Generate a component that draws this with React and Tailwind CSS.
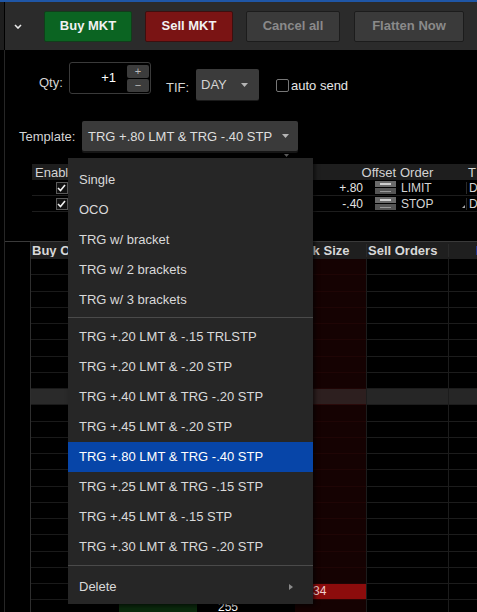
import React from "react";

const templates = [
  ["Single", "OCO", "TRG w/ bracket", "TRG w/ 2 brackets", "TRG w/ 3 brackets"],
  [
    "TRG +.20 LMT & -.15 TRLSTP",
    "TRG +.20 LMT & -.20 STP",
    "TRG +.40 LMT & TRG -.20 STP",
    "TRG +.45 LMT & -.20 STP",
    "TRG +.80 LMT & TRG -.40 STP",
    "TRG +.25 LMT & TRG -.15 STP",
    "TRG +.45 LMT & -.15 STP",
    "TRG +.30 LMT & TRG -.20 STP",
  ],
];
const current = "TRG +.80 LMT & TRG -.40 STP";

const orders = [
  { offset: "+.80", type: "LIMIT", tif: "D" },
  { offset: "-.40", type: "STOP", tif: "D", grip: true },
];

const ladderRows = Array.from({ length: 22 }, (_, i) => ({
  id: i,
  mid: i === 8,
  ask: i === 20 ? "34" : "",
  bid: i === 21,
  price: i === 21 ? "255" : "",
}));

function Caret({ className = "" }) {
  return (
    <svg width="7" height="4" viewBox="0 0 7 4" className={className}>
      <polygon points="0,0 7,0 3.5,4" fill="#b5b5b5" />
    </svg>
  );
}

function Check() {
  return (
    <span className="flex h-[12px] w-[12px] items-center justify-center border border-[#5a5a5a] bg-[#111]">
      <svg width="9" height="8" viewBox="0 0 9 8">
        <polyline points="1,4 3.5,6.5 8,1" fill="none" stroke="#f2f2f2" strokeWidth="1.6" />
      </svg>
    </span>
  );
}

function OrderSpin() {
  return (
    <div className="flex w-[21px] flex-col gap-px">
      <div className="flex h-[6px] items-center justify-center bg-[#6a6a6a]">
        <div className="h-[2px] w-[11px] bg-[#cfcfcf]" />
      </div>
      <div className="flex h-[6px] items-center justify-center bg-[#555]">
        <div className="h-px w-[11px] bg-[#9a9a9a]" />
      </div>
    </div>
  );
}

function TemplateMenu() {
  return (
    <div className="absolute left-[68px] top-[158px] w-[245px] bg-[#262626] pb-[2px] pt-[7px] text-[13px] text-[#dadada] shadow-[2px_2px_4px_rgba(0,0,0,0.6)]">
      {templates[0].map((t) => (
        <div key={t} className="flex h-[30px] items-center pl-[11px]">
          {t}
        </div>
      ))}
      <div className="mb-[4px] mt-[2px] h-px bg-[#4a4a4a]" />
      {templates[1].map((t) => (
        <div
          key={t}
          className={`flex h-[30px] items-center pl-[11px] ${
            t === current ? "bg-[#0745a8] text-white" : ""
          }`}
        >
          {t}
        </div>
      ))}
      <div className="mb-[6px] mt-[3px] h-px bg-[#4a4a4a]" />
      <div className="flex h-[30px] items-center justify-between pl-[11px] pr-[20px]">
        <span>Delete</span>
        <svg width="4" height="6" viewBox="0 0 4 6">
          <polygon points="0,0 4,3 0,6" fill="#8a8a8a" />
        </svg>
      </div>
    </div>
  );
}

export default function App() {
  return (
    <div className="relative h-[612px] w-[477px] overflow-hidden bg-black font-['Liberation_Sans',Arial,sans-serif] text-[13px] text-[#d4d4d4]">
      <div className="h-[2px] bg-[#1f56a6]" />
      <div className="flex h-[610px]">
        {/* left rail */}
        <div className="flex w-[5px] shrink-0 flex-col">
          <div className="h-[48px] border-r border-black bg-[#1e1e1e]" />
          <div className="flex-1 border-r border-[#262626]" />
        </div>

        <div className="flex min-w-0 flex-1 flex-col">
          {/* toolbar */}
          <div className="flex h-[48px] shrink-0 items-center bg-[#2b2b2b] pl-[9px]">
            <svg width="8" height="5" viewBox="0 0 8 5" className="mt-px shrink-0">
              <polyline points="1,1 4,4 7,1" fill="none" stroke="#e8e8e8" strokeWidth="1.6" />
            </svg>
            <button className="ml-[22px] h-[31px] w-[88px] shrink-0 rounded-[2px] border border-[#123d1b] bg-[#0b6422] text-[13px] font-bold text-[#f2f2f2]">
              Buy MKT
            </button>
            <button className="ml-[13px] h-[31px] w-[88px] shrink-0 rounded-[2px] border border-[#3d0f0f] bg-[#7a1414] text-[13px] font-bold text-[#f2f2f2]">
              Sell MKT
            </button>
            <button className="ml-[13px] h-[31px] w-[94px] shrink-0 rounded-[2px] border border-[#1c1c1c] bg-[#3a3a3a] text-[13px] font-bold text-[#8a8a8a]">
              Cancel all
            </button>
            <button className="ml-[14px] h-[31px] w-[110px] shrink-0 rounded-[2px] border border-[#1c1c1c] bg-[#3a3a3a] text-[13px] font-bold text-[#8a8a8a]">
              Flatten Now
            </button>
          </div>

          {/* qty / tif / auto send */}
          <div className="flex shrink-0 items-start pl-[34px] pt-[12px]">
            <span className="mt-[13px] w-[30px] leading-[15px]">Qty:</span>
            <div className="flex h-[32px] w-[82px] items-center rounded-[3px] border border-[#3a3a3a] bg-black pr-[1px]">
              <span className="flex-1 pr-[11px] text-right text-white">+1</span>
              <div className="flex flex-col gap-px">
                <span className="flex h-[13px] w-[22px] items-center justify-center rounded-[2px] bg-[#3c3c3c] text-[11px] leading-none text-[#bbb]">
                  +
                </span>
                <span className="flex h-[13px] w-[22px] items-center justify-center rounded-[2px] bg-[#3c3c3c] text-[11px] leading-none text-[#bbb]">
                  −
                </span>
              </div>
            </div>
            <span className="ml-[15px] mt-[18px] w-[30px] leading-[15px]">TIF:</span>
            <div className="mt-[7px] flex h-[31px] w-[63px] items-center justify-between rounded-[2px] bg-[#3b3b3b] pl-[5px] pr-[11px] shadow-[0_1px_0_#1a1a1a]">
              <span>DAY</span>
              <Caret />
            </div>
            <span className="ml-[17px] mt-[17px] h-[13px] w-[13px] rounded-[2px] border border-[#777] bg-black" />
            <span className="ml-[2px] mt-[16px] leading-[15px] text-[#e6e6e6]">auto send</span>
          </div>

          {/* template */}
          <div className="mt-[21px] flex shrink-0 items-center pl-[14px]">
            <span className="w-[63px] pt-[2px]">Template:</span>
            <div className="flex h-[30px] w-[216px] items-center justify-between rounded-[2px] bg-[#3a3a3a] pl-[6px] pr-[9px] text-[#dedede] shadow-[0_2px_0_#151515]">
              <span className="pt-px">{current}</span>
              <Caret />
            </div>
          </div>

          {/* order table */}
          <div className="ml-[27px] mt-[13px] flex shrink-0 flex-col">
            <div className="flex h-[16px] items-center bg-[#1e1e1e] leading-none">
              <span className="w-[59px] shrink-0 pl-[3px]">Enable</span>
              <span className="min-w-0 flex-1" />
              <span className="w-[84px] shrink-0 pr-[1px] text-right">Offset</span>
              <span className="w-[69px] shrink-0 pl-[3px]">Order</span>
              <span className="w-[11px] shrink-0 overflow-hidden pl-[2px]">T</span>
            </div>
            {orders.map((o) => (
              <div key={o.type} className="flex h-[16px] items-center border-b border-[#1d1d1d] text-[12px] leading-none">
                <span className="flex w-[59px] shrink-0 justify-center">
                  <Check />
                </span>
                <span className="min-w-0 flex-1" />
                <span className="flex w-[84px] shrink-0 items-center justify-end pr-[1px]">
                  <span className="text-[#e4e4e4]">{o.offset}</span>
                  <span className="ml-[12px]">
                    <OrderSpin />
                  </span>
                </span>
                <span className="relative w-[69px] shrink-0 self-stretch pl-[4px] pt-[2px]">
                  {o.type}
                  {o.grip && (
                    <svg width="3" height="3" viewBox="0 0 3 3" className="absolute bottom-[3px] right-[1px]">
                      <polygon points="3,0 3,3 0,3" fill="#aaa" />
                    </svg>
                  )}
                </span>
                <span className="w-[11px] shrink-0 overflow-hidden border-l border-[#2a2a2a] pl-[2px]">{o.tif}</span>
              </div>
            ))}
          </div>

          {/* price ladder */}
          <div className="mt-[29px] flex min-h-0 flex-1 border-t border-[#3a3a3a]">
            <div className="w-[26px] shrink-0 border-r border-[#2e2e2e]" />
            <div className="flex min-w-0 flex-1 flex-col">
              <div className="flex h-[17px] shrink-0 items-center whitespace-nowrap bg-[#1f1f1f] font-bold leading-none text-[#d8d8d8]">
                <span className="w-[88px] shrink-0 overflow-hidden pl-[1px]">Buy Orders</span>
                <span className="w-[78px] shrink-0 overflow-hidden pl-[1px]">Bid Size</span>
                <span className="w-[98px] shrink-0 overflow-hidden pl-[1px]">Price</span>
                <span className="w-[71px] shrink-0 overflow-hidden pl-[1px]">Ask Size</span>
                <span className="w-[82px] shrink-0 overflow-hidden border-l border-[#2a2a2a] pl-[1px]">Sell Orders</span>
                <span className="min-w-0 flex-1 overflow-hidden border-l border-[#2a2a2a] pl-[27px] text-[#2f7ee0]">P&amp;L</span>
              </div>
              {ladderRows.map((r) => (
                <div key={r.id} className="flex h-[16.25px] shrink-0 text-[12px] leading-[15px]">
                  <span className={`w-[88px] shrink-0 border-b border-[#1a1a1a] ${r.mid ? "bg-[#2a2a2a]" : ""}`} />
                  <span className={`w-[78px] shrink-0 border-b border-[#1a1a1a] ${r.bid ? "bg-[#0b2a0d]" : r.mid ? "bg-[#2a2a2a]" : ""}`} />
                  <span className={`w-[98px] shrink-0 border-b border-[#1a1a1a] pl-[21px] text-white ${r.mid ? "bg-[#2a2a2a]" : ""}`}>
                    {r.price}
                  </span>
                  <span
                    className={`w-[71px] shrink-0 border-b pl-[18px] text-[#f0d0d0] ${
                      r.ask
                        ? "border-[#2a0505] bg-[#8c0c0c]"
                        : r.mid
                        ? "border-[#2a0a0a] bg-[#2d1f1f]"
                        : "border-[#1f0505] bg-[#150202]"
                    }`}
                  >
                    {r.ask}
                  </span>
                  <span className={`w-[82px] shrink-0 border-b border-l border-[#1c1c1c] ${r.mid ? "bg-[#262626]" : ""}`} />
                  <span className={`min-w-0 flex-1 border-b border-l border-[#1c1c1c] ${r.mid ? "bg-[#262626]" : ""}`} />
                </div>
              ))}
            </div>
          </div>
        </div>
      </div>

      {/* dropdown pointer under the template box */}
      <svg width="5" height="3" viewBox="0 0 5 3" className="absolute left-[284px] top-[154px]">
        <polygon points="0,0 5,0 2.5,3" fill="#5a5a5a" />
      </svg>

      <TemplateMenu />
    </div>
  );
}
